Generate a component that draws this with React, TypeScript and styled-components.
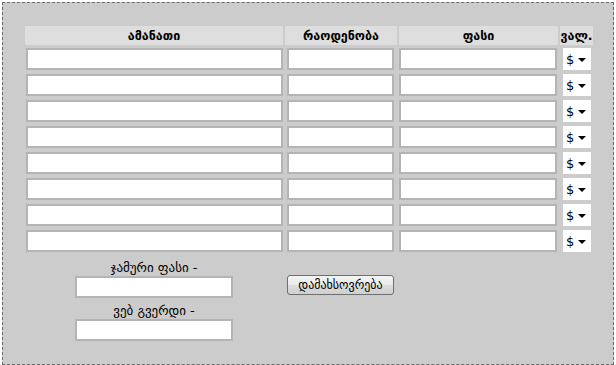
import styled, { createGlobalStyle } from 'styled-components';

const GlobalStyle = createGlobalStyle`
  html, body {
    margin: 0;
    padding: 0;
    background: #ffffff;
  }
  body {
    padding: 2px 0 0 2px;
    font-family: "DejaVu Sans", "Noto Sans", sans-serif;
  }
`;

const Frame = styled.div`
  box-sizing: border-box;
  width: 612px;
  height: 363px;
  border: 1px dashed #6b6b6b;
  background: #cccccc;
  padding: 23px 0 0 22px;
`;

const Table = styled.div`
  display: grid;
  grid-template-columns: 258px 112px 159px 33px;
  grid-template-rows: 19px repeat(8, 24px) auto;
  row-gap: 2px;
  column-gap: 2px;
`;

const HeaderCell = styled.div`
  background: #dedede;
  display: flex;
  align-items: center;
  justify-content: center;
  font-size: 12.5px;
  font-weight: bold;
  color: #000;
  white-space: nowrap;
`;

const Cell = styled.div<{ $pad?: number }>`
  display: flex;
  align-items: center;
  padding-left: ${(p) => p.$pad ?? 0}px;
`;

const TextInput = styled.input<{ $w: number }>`
  box-sizing: border-box;
  width: ${(p) => p.$w}px;
  height: 22px;
  margin: 0;
  padding: 0 3px;
  border: 2px solid #b4b4b4;
  background: #ffffff;
  font-family: inherit;
  font-size: 12px;
  outline: none;
`;

const SelectWrap = styled.div`
  position: relative;
  width: 28px;
  height: 22px;
  margin-left: 3px;
`;

const CurrencySelect = styled.select`
  appearance: none;
  -webkit-appearance: none;
  box-sizing: border-box;
  width: 100%;
  height: 100%;
  margin: 0;
  padding: 0 0 0 3px;
  border: none;
  border-radius: 0;
  background: #ffffff;
  font-family: "DejaVu Sans", sans-serif;
  font-weight: normal;
  font-size: 13px;
  color: #000;
  outline: none;
`;

const Arrow = styled.span`
  position: absolute;
  right: 5px;
  top: 10px;
  width: 0;
  height: 0;
  border-left: 4px solid transparent;
  border-right: 4px solid transparent;
  border-top: 4px solid #000;
  pointer-events: none;
`;

const Totals = styled.div`
  display: flex;
  flex-direction: column;
  align-items: center;
`;

const FieldLabel = styled.div`
  height: 21px;
  line-height: 26px;
  font-size: 13px;
  color: #000;
  white-space: nowrap;
`;

const ButtonCell = styled.div`
  padding: 19px 0 0 2px;
`;

const SaveButton = styled.button`
  box-sizing: border-box;
  width: 107px;
  height: 20px;
  margin: 0;
  padding: 0;
  border: 1px solid #707070;
  border-radius: 3px;
  background: linear-gradient(#f3f3f3 0%, #ebebeb 50%, #dddddd 51%, #cfcfcf 100%);
  font-family: inherit;
  font-size: 12px;
  color: #000;
`;

const rows = Array.from({ length: 8 }, (_, i) => i);

export default function App() {
  return (
    <>
      <GlobalStyle />
      <Frame>
        <Table>
          <HeaderCell>ამანათი</HeaderCell>
          <HeaderCell>რაოდენობა</HeaderCell>
          <HeaderCell>ფასი</HeaderCell>
          <HeaderCell>ვალ.</HeaderCell>

          {rows.map((r) => (
            <div key={r} style={{ display: 'contents' }}>
              <Cell $pad={1}>
                <TextInput $w={257} />
              </Cell>
              <Cell $pad={2}>
                <TextInput $w={107} />
              </Cell>
              <Cell>
                <TextInput $w={158} />
              </Cell>
              <Cell>
                <SelectWrap>
                  <CurrencySelect defaultValue="usd">
                    <option value="usd">$</option>
                  </CurrencySelect>
                  <Arrow />
                </SelectWrap>
              </Cell>
            </div>
          ))}

          <Totals>
            <FieldLabel>ჯამური ფასი -</FieldLabel>
            <TextInput $w={158} />
            <FieldLabel>ვებ გვერდი -</FieldLabel>
            <TextInput $w={158} />
          </Totals>
          <ButtonCell>
            <SaveButton>დამახსოვრება</SaveButton>
          </ButtonCell>
        </Table>
      </Frame>
    </>
  );
}
